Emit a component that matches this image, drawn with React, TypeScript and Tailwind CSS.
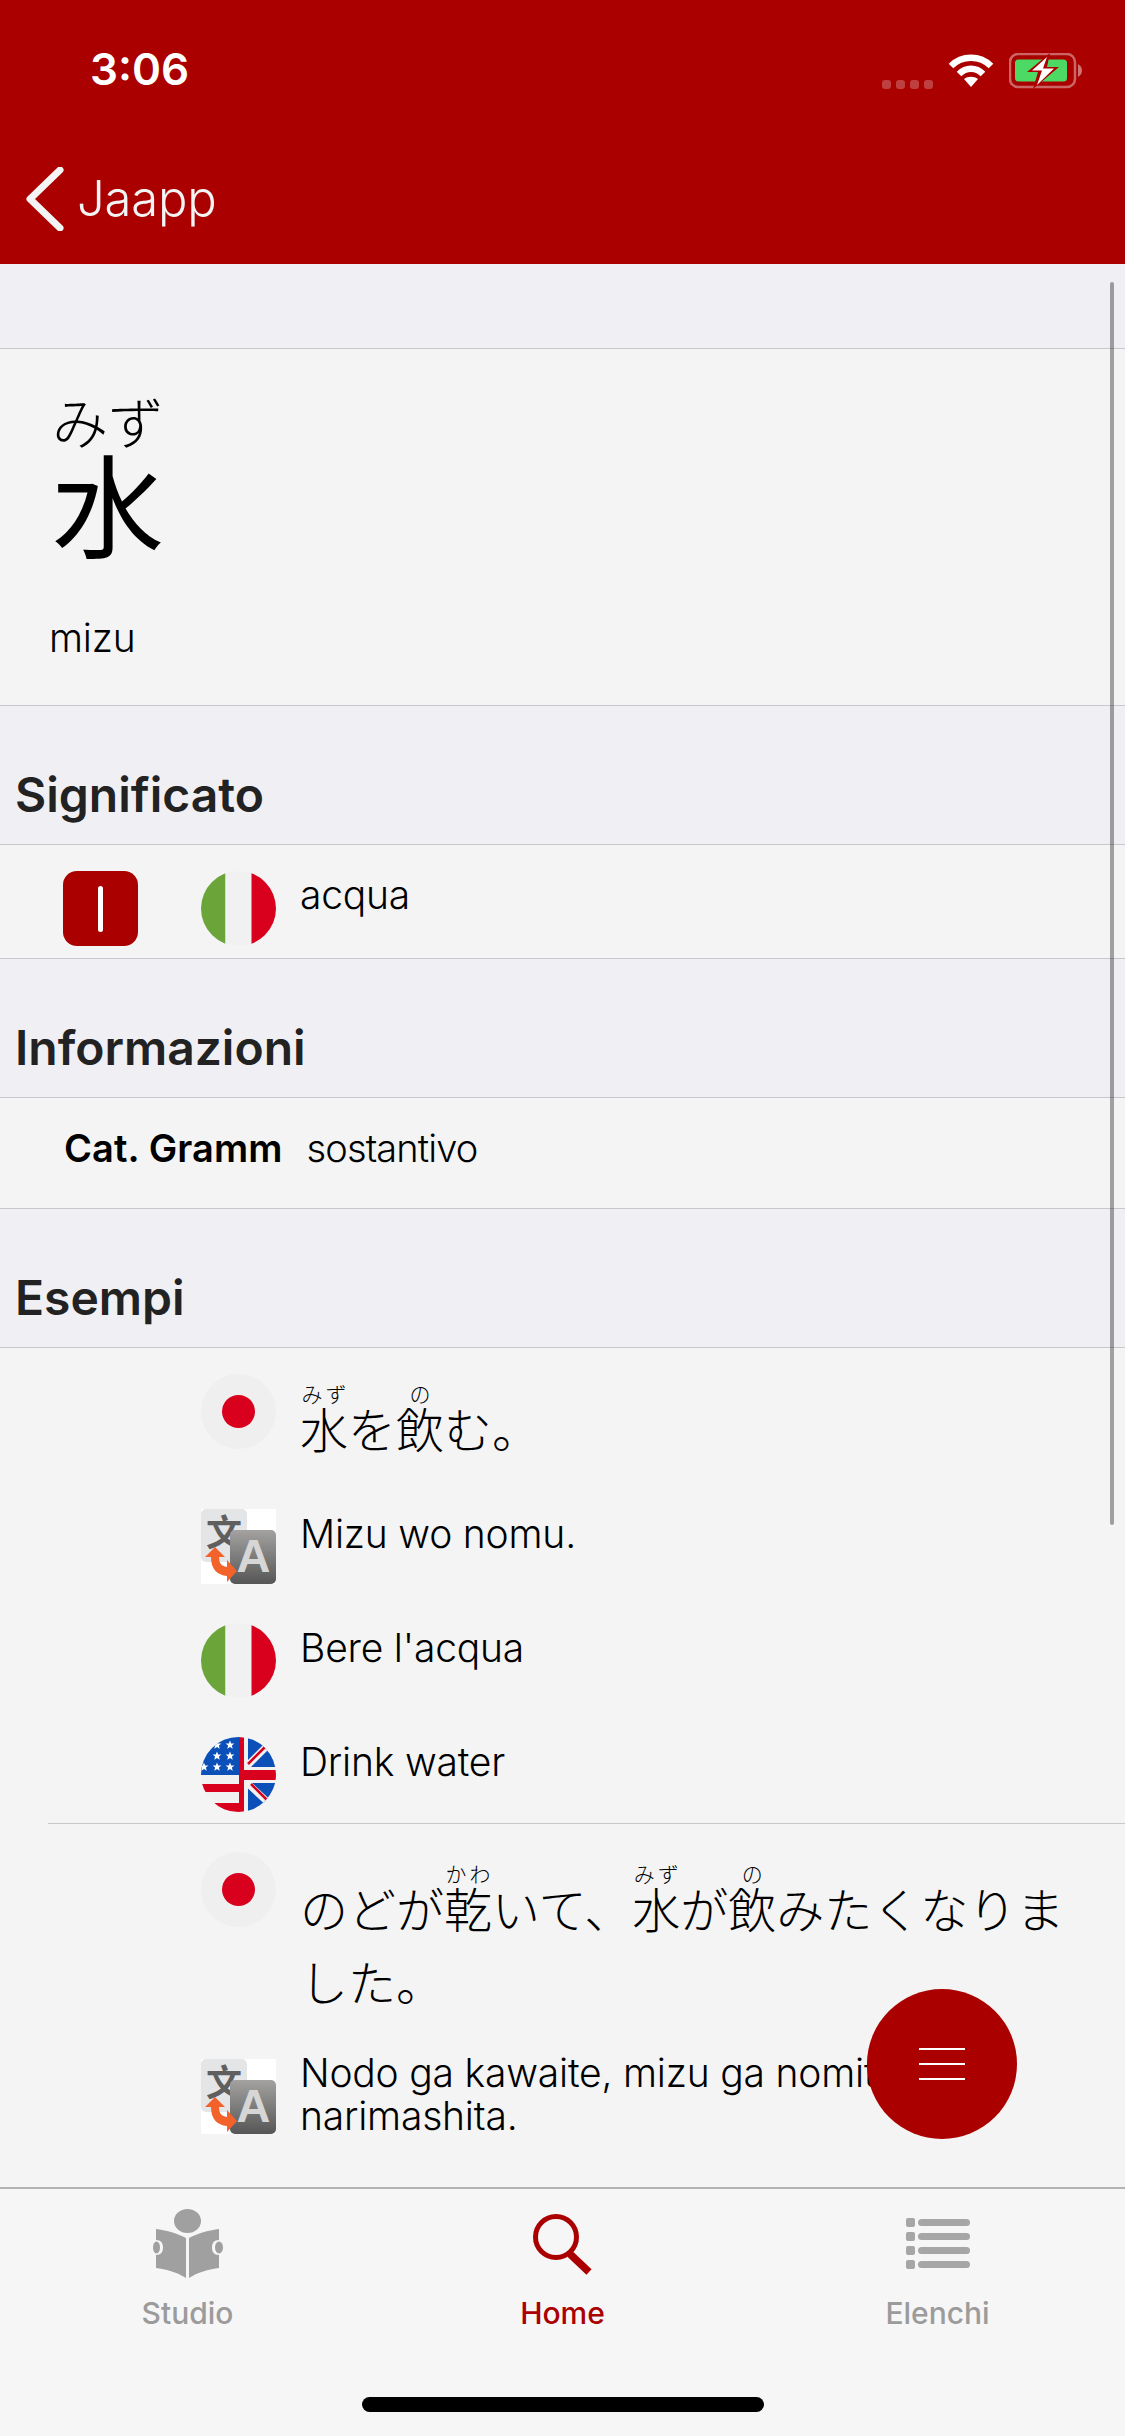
const jp = "[font-family:'Noto_Sans_CJK_JP',sans-serif]";

function Furi({ base, kana }: { base: string; kana: string }) {
  return (
    <ruby className="[ruby-position:over]">
      {base}
      <rt className="text-[21px] leading-[25px] font-light">{kana}</rt>
    </ruby>
  );
}

function JapanFlag() {
  return (
    <svg viewBox="0 0 75 75" className="w-[75px] h-[75px] shrink-0">
      <circle cx="37.5" cy="37.5" r="37.5" fill="#efefef" />
      <circle cx="37.5" cy="37.5" r="16.5" fill="#d9001e" />
    </svg>
  );
}

function ItalyFlag() {
  return (
    <svg viewBox="0 0 75 75" className="w-[75px] h-[75px] shrink-0">
      <defs>
        <clipPath id="it-clip">
          <circle cx="37.5" cy="37.5" r="37.5" />
        </clipPath>
      </defs>
      <g clipPath="url(#it-clip)">
        <rect width="24.5" height="75" fill="#6ba53a" />
        <rect x="24.5" width="26" height="75" fill="#f1f1f1" />
        <rect x="50.5" width="24.5" height="75" fill="#d9001e" />
      </g>
    </svg>
  );
}

function Star({ x, y }: { x: number; y: number }) {
  return (
    <polygon
      transform={`translate(${x} ${y})`}
      points="0,-4.6 1.2,-1.5 4.4,-1.4 1.9,0.6 2.7,3.7 0,2 -2.7,3.7 -1.9,0.6 -4.4,-1.4 -1.2,-1.5"
      fill="#fff"
    />
  );
}

function UsUkFlag() {
  return (
    <svg viewBox="0 0 75 75" className="w-[75px] h-[75px] shrink-0">
      <defs>
        <clipPath id="us-clip">
          <circle cx="37.5" cy="37.5" r="37.5" />
        </clipPath>
      </defs>
      <g clipPath="url(#us-clip)">
        <rect width="75" height="75" fill="#f1f1f1" />
        {/* US half */}
        <rect width="38" height="38" fill="#0b50b8" />
        <Star x={16} y={8} />
        <Star x={29} y={8} />
        <Star x={16} y={19} />
        <Star x={29} y={19} />
        <Star x={3} y={30} />
        <Star x={16} y={30} />
        <Star x={29} y={30} />
        <rect y="47" width="38" height="8" fill="#d9001e" />
        <rect y="66" width="38" height="9" fill="#d9001e" />
        {/* UK half */}
        <polygon points="47,0 75,0 75,30 47,30" fill="#0b50b8" />
        <polygon points="47,46 75,46 75,75 47,75" fill="#0b50b8" />
        <path d="M45 30 L70 5 M45 45 L72 70" stroke="#f1f1f1" strokeWidth="7" />
        <path d="M47 27 L66 8 M50 47 L68 65" stroke="#d9001e" strokeWidth="2.5" />
        <rect x="38" width="5" height="75" fill="#d9001e" />
        <rect x="38" y="33" width="37" height="10" fill="#d9001e" />
      </g>
    </svg>
  );
}

function TranslateIcon({ id }: { id: string }) {
  return (
    <svg viewBox="0 0 75 75" className="w-[75px] h-[75px] shrink-0">
      <defs>
        <linearGradient id={id} x1="0" y1="0" x2="0" y2="1">
          <stop offset="0" stopColor="#a3a2a1" />
          <stop offset="1" stopColor="#565656" />
        </linearGradient>
      </defs>
      <rect width="75" height="75" fill="#fff" />
      <rect width="46" height="53" rx="5" fill="#e4e5e7" />
      <text x="23" y="37" textAnchor="middle" fontSize="36" fontWeight="700" fill="#5f5f5f" fontFamily="'Noto Sans CJK SC', sans-serif">
        文
      </text>
      <rect x="29" y="21" width="46" height="54" rx="5" fill={`url(#${id})`} />
      <text x="52.5" y="63" textAnchor="middle" fontSize="47" fontWeight="700" fill="#d6d6d6" fontFamily="'Liberation Sans', sans-serif">
        A
      </text>
      <path d="M4 48 L14 38 L24 48 L18 48 C18 54 20 57 26 58 L26 51 L36 62 L26 73 L26 67 C16 66 10 60 10 48 Z" fill="#f4622c" />
    </svg>
  );
}

function ExampleRow({ icon, children, top = 'pt-[3px]', gap = 'mb-[39px]' }: { icon: React.ReactNode; children: React.ReactNode; top?: string; gap?: string }) {
  return (
    <div className={`flex gap-6 pl-[201px] pr-[52px] ${gap}`}>
      {icon}
      <div className={`${top} min-w-0 flex-1`}>{children}</div>
    </div>
  );
}

function LatinText({ children }: { children: React.ReactNode }) {
  return <p className="text-[39px] leading-[43px] text-black font-light tracking-[-0.2px]">{children}</p>;
}

function SectionTitle({ title, h }: { title: string; h: string }) {
  return (
    <div className={`${h} bg-[#efeff4] border-y border-[#c8c7cc] flex items-end pl-[15px] pb-[21px]`}>
      <h2 className="text-[48px] leading-[56px] font-semibold text-[#222]">{title}</h2>
    </div>
  );
}

function TabItem({ label, active, children }: { label: string; active?: boolean; children: React.ReactNode }) {
  return (
    <div className="flex flex-col items-center">
      <div className="h-[90px] flex items-center justify-center">{children}</div>
      <span className={`text-[30px] leading-[36px] font-medium mt-[6px] ${active ? 'text-[#aa0000]' : 'text-[#9b9b9b]'}`}>{label}</span>
    </div>
  );
}

export default function App() {
  return (
    <div className="relative w-[1125px] h-[2436px] overflow-hidden bg-[#f4f4f4] flex flex-col [font-family:'Inter','Noto_Sans_CJK_JP',sans-serif]">
      {/* header */}
      <header className="h-[264px] shrink-0 bg-[#aa0000] relative text-white">
        <div className="flex items-start justify-between pl-[90px] pr-[42px] pt-[45px]">
          <span className="text-[44px] leading-[48px] font-semibold">3:06</span>
          <div className="flex items-center mt-[7px]">
            <div className="flex gap-[5px] mt-[28px] mr-[15px]">
              <span className="w-[9px] h-[9px] rounded-[3px] bg-white/25" />
              <span className="w-[9px] h-[9px] rounded-[3px] bg-white/25" />
              <span className="w-[9px] h-[9px] rounded-[3px] bg-white/25" />
              <span className="w-[9px] h-[9px] rounded-[3px] bg-white/25" />
            </div>
            <svg viewBox="0 0 46 34" className="w-[46px] h-[34px] mr-[15px]" fill="none" stroke="#fff" strokeWidth="6.5">
              <path d="M3 12 C14 1 32 1 43 12" />
              <path d="M11 20 C18 13 28 13 35 20" />
              <path d="M16 25 L23 33 L30 25 C26 22 20 22 16 25 Z" fill="#fff" stroke="none" />
            </svg>
            <svg viewBox="0 0 74 36" className="w-[74px] h-[36px]">
              <rect x="1" y="1" width="65" height="33" rx="8" fill="none" stroke="#fff" strokeOpacity="0.4" strokeWidth="2.5" />
              <rect x="6" y="6.5" width="52" height="22" rx="3.5" fill="#4cd964" />
              <path d="M69 11 C72 13 73 15 73 17.5 C73 20 72 22 69 24 Z" fill="#fff" fillOpacity="0.45" />
              <path d="M41 0 L18 19 L29 19 L24 36 L50 14 L38 14 Z" fill="#aa0000" />
              <path d="M38 4 L23 17.5 L33 17.5 L28 32 L45 15.5 L34 15.5 Z" fill="#fff" />
            </svg>
          </div>
        </div>
        <div className="flex items-center absolute left-[26px] top-[167px]">
          <svg viewBox="0 0 38 64" className="w-[38px] h-[64px]" fill="none" stroke="#f4f4f4" strokeWidth="7" strokeLinecap="round" strokeLinejoin="round">
            <path d="M34 3 L4 32 L34 61" />
          </svg>
          <span className="ml-[13px] text-[49px] leading-[60px] font-light tracking-[-0.2px] text-[#f4f4f4]">Jaapp</span>
        </div>
      </header>

      {/* content */}
      <main className="relative flex-1 min-h-0 overflow-hidden">
        <div className="h-[85px] bg-[#efeff4] border-b border-[#c8c7cc]" />

        <div className="h-[356px] pl-[52px] pt-[36px] text-black">
          <div className={`${jp} text-[112px] leading-[112px] mt-[9px]`}>
            <ruby className="[ruby-position:over]">
              水<rt className="text-[56px] leading-[80px] font-light">みず</rt>
            </ruby>
          </div>
          <p className="-ml-[3px] mt-[57px] text-[39px] leading-[48px] font-light tracking-[-0.2px]">mizu</p>
        </div>

        <SectionTitle title="Significato" h="h-[140px]" />
        <div className="h-[113px] flex items-start pt-[26px] pl-[63px]">
          <div className="w-[75px] h-[75px] rounded-[14px] bg-[#aa0000] flex items-center justify-center">
            <span className="w-[5px] h-[46px] rounded-full bg-white" />
          </div>
          <div className="ml-[63px]">
            <ItalyFlag />
          </div>
          <span className="ml-6 text-[39px] leading-[48px] font-light tracking-[-0.2px] text-black">acqua</span>
        </div>

        <SectionTitle title="Informazioni" h="h-[140px]" />
        <div className="h-[111px] flex items-center pl-[64px] pb-[9px] -mt-px">
          <span className="text-[38px] leading-[48px] font-semibold text-black tracking-[0.1px]">Cat. Gramm</span>
          <span className="ml-6 text-[38px] leading-[48px] font-light tracking-[-0.9px] text-black">sostantivo</span>
        </div>

        <SectionTitle title="Esempi" h="h-[140px]" />

        <div className="pt-[26px]">
          <ExampleRow icon={<JapanFlag />} top="pt-[9px]" gap="mb-[45px]">
            <p className={`${jp} text-[48px] leading-[73px] font-light text-black`}>
              <Furi base="水" kana="みず" />を<Furi base="飲" kana="の" />む。
            </p>
          </ExampleRow>
          <ExampleRow icon={<TranslateIcon id="tr-a" />}>
            <LatinText>Mizu wo nomu.</LatinText>
          </ExampleRow>
          <ExampleRow icon={<ItalyFlag />}>
            <LatinText>Bere l'acqua</LatinText>
          </ExampleRow>
          <div className="flex gap-6 pl-[201px] pr-[52px] pb-[11px]">
            <UsUkFlag />
            <div className="pt-[3px]">
              <LatinText>Drink water</LatinText>
            </div>
          </div>
        </div>

        <div className="ml-[48px] border-t border-[#c8c7cc] pt-[28px]">
          <div className="-ml-[48px]">
            <ExampleRow icon={<JapanFlag />} top="pt-[11px]" gap="mb-[42px]">
              <p className={`${jp} text-[48px] leading-[73px] font-light text-black`}>
                のどが<Furi base="乾" kana="かわ" />いて、<Furi base="水" kana="みず" />が<Furi base="飲" kana="の" />みたくなりました。
              </p>
            </ExampleRow>
            <ExampleRow icon={<TranslateIcon id="tr-b" />} top="-mt-[8px]">
              <LatinText>Nodo ga kawaite, mizu ga nomitaku narimashita.</LatinText>
            </ExampleRow>
          </div>
        </div>

        {/* scroll indicator */}
        <div className="absolute right-[11px] top-[18px] w-1 h-[1243px] rounded-full bg-black/35" />
      </main>

      {/* floating menu button */}
      <button type="button" className="absolute left-[867px] top-[1989px] w-[150px] h-[150px] rounded-full bg-[#aa0000] flex flex-col items-center justify-center gap-[13px]">
        <span className="w-[46px] h-[2px] bg-white" />
        <span className="w-[46px] h-[2px] bg-white" />
        <span className="w-[46px] h-[2px] bg-white" />
      </button>

      {/* tab bar */}
      <nav className="relative h-[249px] shrink-0 bg-[#f6f6f6] border-t-2 border-[#b3b3b3]">
        <div className="grid grid-cols-3 pt-[10px]">
          <TabItem label="Studio">
            <svg viewBox="0 0 70 70" className="w-[70px] h-[70px]" fill="#a0a0a0">
              <ellipse cx="34.5" cy="12" rx="13.5" ry="12" />
              <path d="M3 20 C12 21 24 24 33 29 L33 69 C24 63 12 60 3 59 L3 46 C8 46 10 43 10 38.5 C10 34 8 31 3 31 Z" />
              <path d="M66 20 C57 21 45 24 36 29 L36 69 C45 63 57 60 66 59 L66 46 C61 46 59 43 59 38.5 C59 34 61 31 66 31 Z" />
              <ellipse cx="3.5" cy="38.5" rx="3.5" ry="6" />
              <ellipse cx="66" cy="38.5" rx="4" ry="6" />
            </svg>
          </TabItem>
          <TabItem label="Home" active>
            <svg viewBox="0 0 60 62" className="w-[60px] h-[62px]" fill="none" stroke="#aa0000">
              <circle cx="23" cy="24" r="20.5" strokeWidth="5" />
              <path d="M37 41 L56 59" strokeWidth="7.5" />
            </svg>
          </TabItem>
          <TabItem label="Elenchi">
            <svg viewBox="0 0 64 52" className="w-[64px] h-[52px]" fill="#a6a6a6">
              <rect x="0" y="0" width="9" height="9" rx="2" />
              <rect x="12" y="1" width="52" height="7" rx="3.5" />
              <rect x="0" y="14" width="9" height="9" rx="2" />
              <rect x="12" y="15" width="52" height="7" rx="3.5" />
              <rect x="0" y="28" width="9" height="9" rx="2" />
              <rect x="12" y="29" width="52" height="7" rx="3.5" />
              <rect x="0" y="42" width="9" height="9" rx="2" />
              <rect x="12" y="43" width="52" height="7" rx="3.5" />
            </svg>
          </TabItem>
        </div>
        <div className="absolute left-[362px] bottom-[24px] w-[402px] h-[15px] rounded-full bg-black" />
      </nav>
    </div>
  );
}
